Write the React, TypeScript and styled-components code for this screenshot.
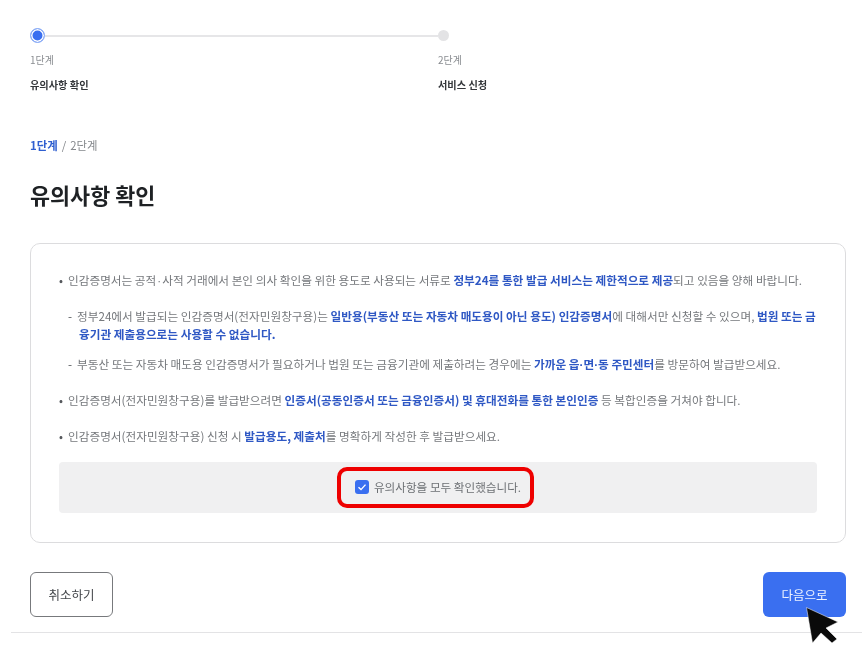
import React from "react";
import styled, { createGlobalStyle } from "styled-components";

const Global = createGlobalStyle`
  html, body { margin: 0; padding: 0; background: #fff; }
  body { font-family: "Noto Sans CJK KR", "Noto Sans", sans-serif; color: #1e2124; }
  * { box-sizing: border-box; }
`;

const Page = styled.div`
  position: relative;
  width: 862px;
  height: 652px;
  overflow: hidden;
  padding: 28px 16px 0 30px;
  filter: blur(0.35px);
`;

const Stepper = styled.div`
  display: grid;
  grid-template-columns: 408px 1fr;
`;

const Step = styled.div`
  display: flex;
  flex-direction: column;
`;

const Track = styled.div`
  display: flex;
  align-items: center;
  height: 15px;
`;

const Dot = styled.span<{ $active?: boolean }>`
  flex: none;
  border-radius: 50%;
  width: ${(p) => (p.$active ? 15 : 11)}px;
  height: ${(p) => (p.$active ? 15 : 11)}px;
  background: ${(p) => (p.$active ? "#3a6ff0" : "#e3e3e5")};
  border: ${(p) => (p.$active ? "1.5px solid #8fb0f6" : "none")};
  box-shadow: ${(p) => (p.$active ? "inset 0 0 0 1.5px #fff" : "none")};
`;

const Line = styled.span`
  flex: 1;
  height: 2px;
  background: #e6e6e8;
`;

const StepNumber = styled.div`
  margin-top: 9px;
  font-size: 10px;
  line-height: 16px;
  color: #8a8d91;
`;

const StepName = styled.div`
  margin-top: 9px;
  font-size: 10.2px;
  line-height: 16px;
  font-weight: 700;
  color: #33363a;
`;

const Crumb = styled.div`
  margin-top: 43px;
  font-size: 11.4px;
  line-height: 18px;
  color: #85888c;
  word-spacing: 1.5px;
`;

const CrumbCurrent = styled.strong`
  color: #2f5fd0;
  font-weight: 700;
`;

const Title = styled.h1`
  margin: 26px 0 0;
  font-size: 21.8px;
  line-height: 30px;
  font-weight: 700;
  color: #1e2124;
`;

const Card = styled.section`
  margin-top: 33px;
  height: 300px;
  border: 1px solid #dcdcde;
  border-radius: 10px;
  padding: 27px 28px 29px;
  display: flex;
  flex-direction: column;
`;

const Notes = styled.div`
  flex: 1;
  display: flex;
  flex-direction: column;
`;

const Note = styled.div<{ $sub?: boolean; $gap: number }>`
  display: flex;
  margin: ${(p) => p.$gap}px 0 0 ${(p) => (p.$sub ? 9 : 0)}px;
  font-size: 11.65px;
  line-height: 18px;
  color: #75787c;
  white-space: nowrap;
`;

const Marker = styled.span`
  flex: none;
  width: 9px;
  color: #55585c;
`;

const Em = styled.strong`
  color: #2f58c4;
  font-weight: 700;
`;

const MidDot = styled.span<{ $wide?: boolean }>`
  font-family: "Liberation Sans", sans-serif;
  line-height: 0;
  padding: 0 ${(p) => (p.$wide ? 1 : 0)}px;
`;

const Continued = styled.span`
  display: block;
  padding-left: 2px;
`;

const Banner = styled.div`
  height: 51px;
  background: #f0f0f1;
  border-radius: 4px;
  display: flex;
  align-items: center;
  justify-content: center;
  padding-right: 5px;
`;

const Highlight = styled.label`
  width: 197px;
  height: 41px;
  border: 4px solid #ee0000;
  border-radius: 10px;
  display: flex;
  align-items: center;
  justify-content: center;
  gap: 5px;
  padding: 0 0 2px 5px;
  font-size: 11.6px;
  color: #6d7074;
`;

const Check = styled.span`
  width: 14px;
  height: 14px;
  border-radius: 3px;
  background: #3a6ff0;
  display: flex;
  align-items: center;
  justify-content: center;
`;

const Actions = styled.div`
  margin-top: 29px;
  display: flex;
  justify-content: space-between;
`;

const Button = styled.button<{ $primary?: boolean }>`
  width: 83px;
  height: 45px;
  border-radius: 6px;
  font-family: inherit;
  font-size: 12.5px;
  border: ${(p) => (p.$primary ? "none" : "1.5px solid #77797c")};
  background: ${(p) => (p.$primary ? "#3a6ff0" : "#fff")};
  color: ${(p) => (p.$primary ? "#eef3ff" : "#44474b")};
`;

const Divider = styled.div`
  position: absolute;
  left: 11px;
  right: 0;
  top: 632px;
  height: 1px;
  background: #e3e3e5;
`;

const Cursor = styled.svg`
  position: absolute;
  left: 806px;
  top: 607px;
`;

export default function App() {
  return (
    <Page>
      <Global />
      <Stepper>
        <Step>
          <Track>
            <Dot $active />
            <Line />
          </Track>
          <StepNumber>1단계</StepNumber>
          <StepName>유의사항 확인</StepName>
        </Step>
        <Step>
          <Track>
            <Dot />
          </Track>
          <StepNumber>2단계</StepNumber>
          <StepName>서비스 신청</StepName>
        </Step>
      </Stepper>
      <Crumb>
        <CrumbCurrent>1단계</CrumbCurrent> / 2단계
      </Crumb>
      <Title>유의사항 확인</Title>
      <Card>
        <Notes>
          <Note $gap={0}>
            <Marker>•</Marker>
            <span>
              인감증명서는 공적<MidDot $wide>·</MidDot>사적 거래에서 본인 의사 확인을 위한 용도로 사용되는 서류로{" "}
              <Em>정부24를 통한 발급 서비스는 제한적으로 제공</Em>되고 있음을 양해 바랍니다.
            </span>
          </Note>
          <Note $sub $gap={18}>
            <Marker>-</Marker>
            <span>
              정부24에서 발급되는 인감증명서(전자민원창구용)는{" "}
              <Em>일반용(부동산 또는 자동차 매도용이 아닌 용도) 인감증명서</Em>에 대해서만 신청할 수 있으며,{" "}
              <Em>법원 또는 금</Em>
              <Continued>
                <Em>융기관 제출용으로는 사용할 수 없습니다.</Em>
              </Continued>
            </span>
          </Note>
          <Note $sub $gap={12}>
            <Marker>-</Marker>
            <span>
              부동산 또는 자동차 매도용 인감증명서가 필요하거나 법원 또는 금융기관에 제출하려는 경우에는{" "}
              <Em>
                가까운 읍<MidDot>·</MidDot>면<MidDot>·</MidDot>동 주민센터
              </Em>
              를 방문하여 발급받으세요.
            </span>
          </Note>
          <Note $gap={18}>
            <Marker>•</Marker>
            <span>
              인감증명서(전자민원창구용)를 발급받으려면{" "}
              <Em>인증서(공동인증서 또는 금융인증서) 및 휴대전화를 통한 본인인증</Em> 등 복합인증을 거쳐야 합니다.
            </span>
          </Note>
          <Note $gap={18}>
            <Marker>•</Marker>
            <span>
              인감증명서(전자민원창구용) 신청 시 <Em>발급용도, 제출처</Em>를 명확하게 작성한 후 발급받으세요.
            </span>
          </Note>
        </Notes>
        <Banner>
          <Highlight>
            <Check>
              <svg width="10" height="10" viewBox="0 0 10 10" fill="none">
                <path d="M1.5 5.2 L4 7.6 L8.5 2.6" stroke="#fff" strokeWidth="1.4" />
              </svg>
            </Check>
            유의사항을 모두 확인했습니다.
          </Highlight>
        </Banner>
      </Card>
      <Actions>
        <Button>취소하기</Button>
        <Button $primary>다음으로</Button>
      </Actions>
      <Divider />
      <Cursor width="34" height="38" viewBox="0 0 34 38">
        <path d="M0.5 0.5 L32 15 L20 21 L31 32 L26 36 L15 26 L6.5 36 Z" fill="#0a0a0a" stroke="#fff" strokeWidth="0.5" />
      </Cursor>
    </Page>
  );
}
